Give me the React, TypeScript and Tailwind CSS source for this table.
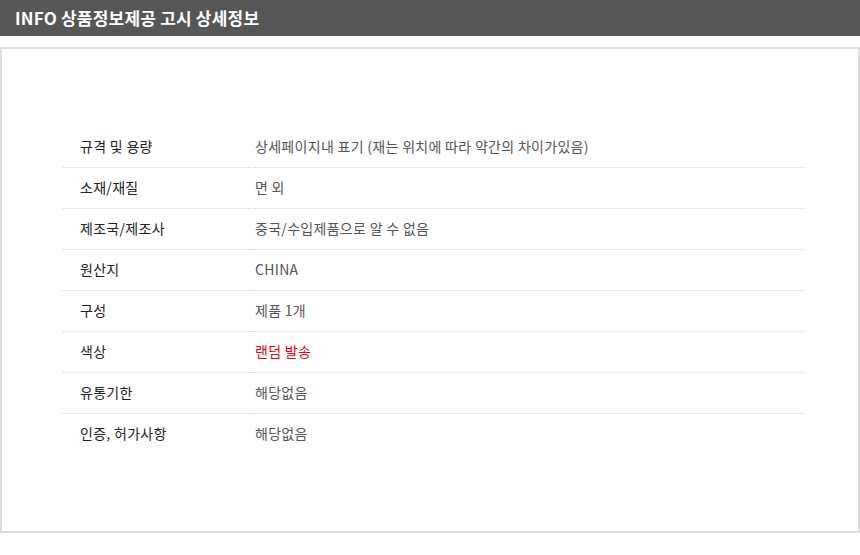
const rows: { label: string; value: string; red?: boolean }[] = [
  { label: '규격 및 용량', value: '상세페이지내 표기 (재는 위치에 따라 약간의 차이가있음)' },
  { label: '소재/재질', value: '면 외' },
  { label: '제조국/제조사', value: '중국/수입제품으로 알 수 없음' },
  { label: '원산지', value: 'CHINA' },
  { label: '구성', value: '제품 1개' },
  { label: '색상', value: '랜덤 발송', red: true },
  { label: '유통기한', value: '해당없음' },
  { label: '인증, 허가사항', value: '해당없음' },
];

export default function App() {
  return (
    <div
      className="w-[860px] h-[555px] bg-white"
      style={{ fontFamily: '"Noto Sans CJK KR", "Noto Sans", sans-serif' }}
    >
      <div className="h-9 bg-[#565656] flex items-center pl-[15px]">
        <h1 className="text-white text-[17px] font-bold tracking-[0.2px]">INFO 상품정보제공 고시 상세정보</h1>
      </div>

      <div className="mt-[11px] h-[486px] border-2 border-[#dddddd] pt-[77px] pl-[61px] pr-[53px]">
        <table className="w-full table-fixed border-collapse">
          <tbody>
            {rows.map((r, i) => (
              <tr
                key={r.label}
                className={i < rows.length - 1 ? 'border-b border-dotted border-[#d5d5d5]' : ''}
              >
                <td className="h-[41px] w-[192px] pl-[17px] text-[14px] tracking-[0.3px] text-[#222]">{r.label}</td>
                <td className={`h-[41px] text-[14px] tracking-[0.3px] ${r.red ? 'text-[#e60012]' : 'text-[#555]'}`}>{r.value}</td>
              </tr>
            ))}
          </tbody>
        </table>
      </div>
    </div>
  );
}
